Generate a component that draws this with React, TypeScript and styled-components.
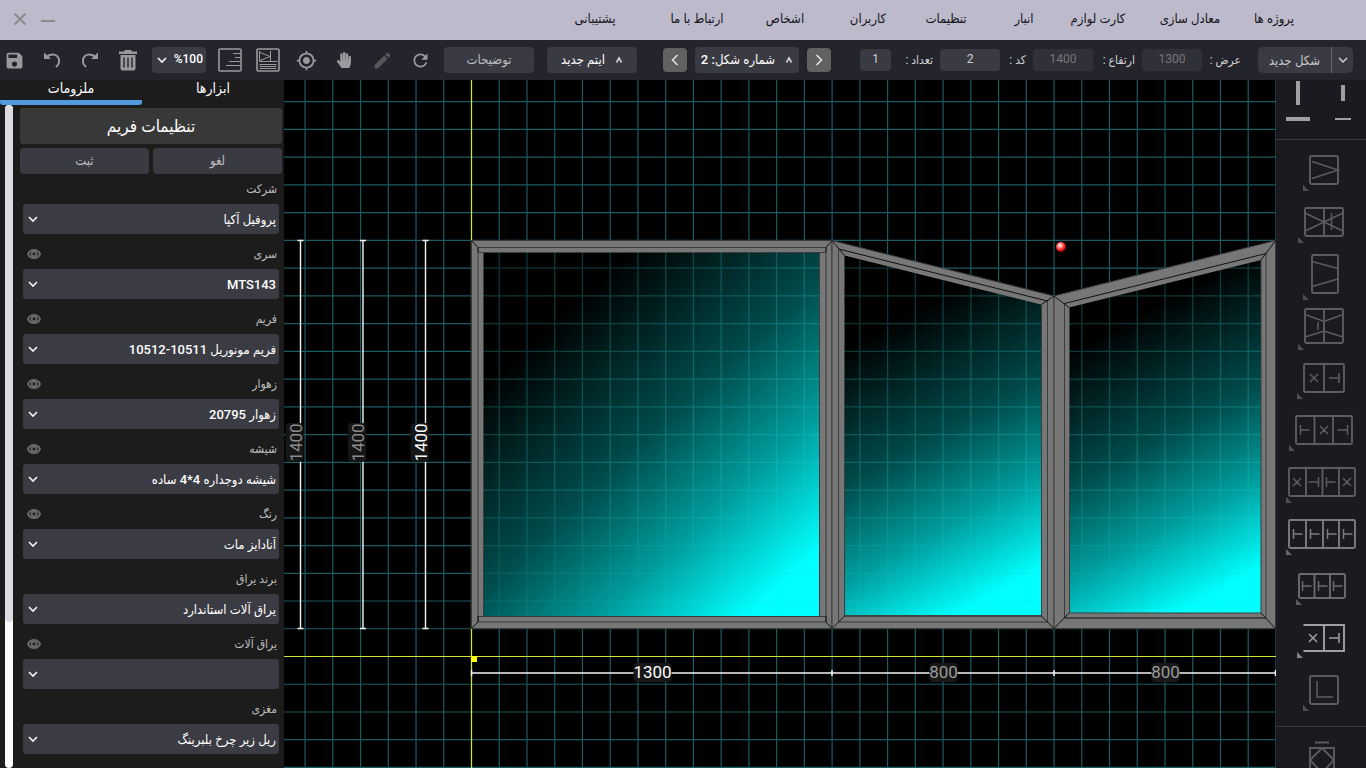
import React from "react";
import styled, { createGlobalStyle } from "styled-components";
import { MdSave, MdGpsFixed, MdEdit, MdRefresh } from "react-icons/md";
import { FaHandPaper } from "react-icons/fa";

const GlobalStyle = createGlobalStyle`
  * { box-sizing: border-box; }
  body {
    margin: 0;
    background: #000;
    font-family: Roboto, "DejaVu Sans Condensed", "DejaVu Sans", sans-serif;
    font-size: 12px;
    color: #d6d6d6;
  }
  button, input, select { font: inherit; color: inherit; border: 0; margin: 0; padding: 0; }
  button { cursor: pointer; }
`;

/* ---------- page frame ---------- */

const Page = styled.div`
  display: flex;
  flex-direction: column;
  height: 100vh;
  overflow: hidden;
`;

const MenuBar = styled.header`
  display: flex;
  flex: none;
  align-items: center;
  justify-content: space-between;
  height: 40px;
  padding: 0 54px 2px 8px;
  background: #bcbacb;
`;

const WindowButtons = styled.div`
  display: flex;
  gap: 4px;
`;

const WindowButton = styled.button`
  display: grid;
  place-items: center;
  width: 24px;
  height: 24px;
  background: none;
  svg { stroke: #8b8b8d; stroke-width: 2; fill: none; }
`;

const Menu = styled.nav`
  display: flex;
  direction: rtl;
`;

const MenuLink = styled.a<{ $width: number }>`
  width: ${(p) => p.$width}px;
  color: #15151d;
  font-size: 13px;
  line-height: 20px;
  text-align: center;
  text-decoration: none;
  white-space: nowrap;
`;

const Toolbar = styled.div`
  display: flex;
  flex: none;
  align-items: center;
  height: 40px;
  padding: 0 13px 0 2px;
  background: #24242d;
`;

const Group = styled.div<{ $gap: number; $before?: number }>`
  display: flex;
  align-items: center;
  gap: ${(p) => p.$gap}px;
  margin-left: ${(p) => p.$before ?? 0}px;
`;

const ToolButton = styled.button<{ $dim?: boolean }>`
  display: grid;
  place-items: center;
  width: 24px;
  height: 26px;
  background: none;
  color: ${(p) => (p.$dim ? "#57575b" : "#999a9c")};
  svg { display: block; }
`;

const ZoomBox = styled.div`
  position: relative;
  width: 54px;
  height: 26px;
  margin: 0 -2px;
`;

const ZoomSelect = styled.select`
  appearance: none;
  width: 100%;
  height: 100%;
  padding: 0 3px 2px;
  border-radius: 4px;
  background: #3a3a43;
  color: #fff;
  font-size: 12px;
  font-weight: 500;
  text-align: right;
`;

const Arrow = styled.svg<{ $left: number }>`
  position: absolute;
  left: ${(p) => p.$left}px;
  top: calc(50% - 5px);
  width: 10px;
  height: 10px;
  fill: none;
  stroke: #f4f4f4;
  stroke-width: 1.6;
  pointer-events: none;
`;

const TextButton = styled.button<{ $width: number; $strong?: boolean }>`
  display: flex;
  align-items: center;
  justify-content: center;
  gap: 10px;
  width: ${(p) => p.$width}px;
  height: 26px;
  padding-bottom: 1px;
  border-radius: 4px;
  background: #3a3a43;
  color: ${(p) => (p.$strong ? "#fff" : "#bdbdbf")};
  font-size: 13px;
  font-weight: ${(p) => (p.$strong ? 500 : 400)};
  direction: rtl;
  white-space: nowrap;
  svg { flex: none; fill: none; stroke: #d0d0d0; stroke-width: 1.6; }
`;

const StepButton = styled.button`
  display: grid;
  place-items: center;
  width: 24px;
  height: 24px;
  border-radius: 4px;
  background: #616161;
  svg { fill: none; stroke: #e6e6e6; stroke-width: 1.5; }
`;

const Fields = styled.div`
  display: flex;
  align-items: center;
  gap: 7px;
  margin-left: auto;
  direction: rtl;
`;

const Field = styled.label<{ $width: number }>`
  display: flex;
  align-items: center;
  justify-content: space-between;
  width: ${(p) => p.$width}px;
  white-space: nowrap;
  color: #d0d0d2;
`;

const FieldInput = styled.input<{ $width: number }>`
  flex: none;
  width: ${(p) => p.$width}px;
  height: 22px;
  padding-bottom: 2px;
  border-radius: 4px;
  background: #3a3a43;
  color: #d0d0d2;
  font-size: 12px;
  text-align: center;
  &:disabled { background: #303039; color: #77777c; }
`;

const SplitButton = styled.div`
  display: flex;
  width: 95px;
  height: 26px;
  margin-left: 17px;
  overflow: hidden;
  border-radius: 5px;
  background: #3a3a43;
`;

const SplitMain = styled.button`
  flex: 1;
  background: none;
  color: #c8c8ca;
  font-size: 13px;
`;

const SplitArrow = styled.button`
  display: grid;
  place-items: center;
  width: 22px;
  border-left: 1px solid #66666c;
  background: none;
  svg { fill: none; stroke: #d0d0d0; stroke-width: 1.5; }
`;

const Main = styled.main`
  display: flex;
  flex: 1;
  min-height: 0;
`;

/* ---------- settings panel ---------- */

const Panel = styled.aside`
  display: flex;
  flex: none;
  flex-direction: column;
  width: 284px;
  overflow: hidden;
  background: #1c1c1c;
`;

const Tabs = styled.div`
  display: flex;
  flex: none;
`;

const Tab = styled.button<{ $active?: boolean }>`
  flex: 1;
  height: 25px;
  padding-bottom: 4px;
  border-bottom: 5px solid ${(p) => (p.$active ? "#4f9bdc" : "transparent")};
  border-radius: 3px;
  background: none;
  color: #fff;
  font-size: 14px;
  font-weight: 500;
  line-height: 16px;
`;

const PanelBody = styled.div`
  display: flex;
  flex: 1;
  gap: 7px;
  min-height: 0;
  padding: 0 2px 0 5px;
`;

const ScrollTrack = styled.div`
  width: 8px;
  border-radius: 4px;
  background: #fff;
`;

const ScrollThumb = styled.div`
  height: 78%;
  border-radius: 4px;
  background: #dcdbe2;
`;

const PanelContent = styled.div`
  flex: 1;
  min-width: 0;
  padding-top: 3px;
  direction: rtl;
`;

const PanelTitle = styled.h2`
  margin: 0 0 4px;
  border-radius: 3px;
  background: #383838;
  color: #fff;
  font-size: 17px;
  font-weight: 500;
  line-height: 36px;
  text-align: center;
`;

const PanelActions = styled.div`
  display: flex;
  gap: 4px;
`;

const PanelButton = styled.button`
  flex: 1;
  height: 26px;
  padding-bottom: 2px;
  border-radius: 4px;
  background: #3a3a43;
  color: #bdbdbf;
  font-size: 13px;
`;

const Row = styled.div`
  height: 65px;
  padding: 0 3px;
`;

const RowHead = styled.div`
  display: flex;
  align-items: center;
  justify-content: space-between;
  height: 30px;
  padding: 0 2px 0 4px;
  color: #bcbcbc;
`;

const EyeButton = styled.button`
  display: block;
  width: 14px;
  height: 14px;
  background: none;
  svg { display: block; fill: none; stroke: #68686a; }
`;

const SelectBox = styled.div`
  position: relative;
  height: 30px;
`;

const Select = styled.select`
  appearance: none;
  width: 100%;
  height: 100%;
  padding: 0 3px;
  border-radius: 3px;
  background: #3b3b43;
  color: #fff;
  font-size: 13px;
  font-weight: 500;
`;

/* ---------- drawing canvas and shape rail ---------- */

const Canvas = styled.section`
  flex: 1;
  min-width: 0;
  background: #000;
  svg { display: block; width: 100%; height: 100%; }
`;

const Rail = styled.aside`
  display: flex;
  flex: none;
  flex-direction: column;
  align-items: center;
  width: 90px;
  overflow: hidden;
  background: #1a1a20;
`;

const LineTools = styled.div`
  display: flex;
  flex: none;
  justify-content: space-between;
  width: 100%;
  height: 60px;
  border-bottom: 1px solid #39393d;
`;

const RailButton = styled.button<{ $tone?: string }>`
  flex: none;
  display: block;
  background: none;
  color: ${(p) => p.$tone ?? "#5c5c60"};
  svg { display: block; }
`;

const ShapeList = styled.div`
  flex: none;
  width: 100%;
  padding: 4px 4px 10px 6px;
  border-bottom: 1px solid #39393d;
`;

/* ---------- data ---------- */

const menu: [string, number][] = [
  ["پروژه ها", 76],
  ["معادل سازی", 92],
  ["کارت لوازم", 92],
  ["انبار", 56],
  ["تنظیمات", 100],
  ["کاربران", 56],
  ["اشخاص", 110],
  ["ارتباط با ما", 66],
  ["پشتیبانی", 138],
];

const fields = [
  { label: "عرض :", value: "1300", width: 99, input: 60, disabled: true },
  { label: "ارتفاع :", value: "1400", width: 102, input: 60, disabled: true },
  { label: "کد :", value: "2", width: 86, input: 60 },
  { label: "تعداد :", value: "1", width: 73, input: 31 },
];

const settings = [
  { label: "شرکت", value: "پروفیل آکپا" },
  { label: "سری", value: "MTS143", eye: true },
  { label: "فریم", value: "فریم مونوریل 10511-10512", eye: true },
  { label: "زهوار", value: "زهوار 20795", eye: true },
  { label: "شیشه", value: "شیشه دوجداره 4*4 ساده", eye: true },
  { label: "رنگ", value: "آنادایز مات", eye: true },
  { label: "برند یراق", value: "یراق آلات استاندارد" },
  { label: "یراق آلات", value: "", eye: true },
  { label: "مغزی", value: "ریل زیر چرخ بلبرینگ" },
];

/* ---------- small icons ---------- */

const Down = () => <path d="M1 3 5 7 9 3" />;

const Up = () => (
  <svg width="8" height="8" viewBox="0 0 8 8"><path d="M1.5 6.500 4 2 6.500 6.500" /></svg>
);

const Chevron = ({ d }: { d: string }) => (
  <svg width="12" height="14" viewBox="0 0 12 14"><path d={d} /></svg>
);

const Eye = () => (
  <svg width="14" height="14" viewBox="0 0 14 14">
    <path d="M1 7C3.500 1.600 10.500 1.600 13 7 10.500 12.400 3.500 12.400 1 7Z" strokeWidth="2" />
    <circle cx="7" cy="7" r="2.400" strokeWidth="2" />
  </svg>
);

const Turn = ({ flip }: { flip?: boolean }) => (
  <svg width="20" height="20" viewBox="0 0 20 20" fill="none" stroke="currentColor" strokeWidth="2">
    <g transform={flip ? "matrix(-1 0 0 1 20 0)" : undefined}>
      <path d="M4 7.500C9 2.500 16 4 17 10c.4 3-1 5.500-3.200 6.800" />
      <path d="M2 2.500V9h7z" fill="currentColor" stroke="none" />
    </g>
  </svg>
);

const Trash = () => (
  <svg width="20" height="22" viewBox="0 0 20 22" fill="currentColor">
    <path d="M1 2.600h5L7 1h6l1 1.600h5v2.400H1z" />
    <path fillRule="evenodd" d="M2.500 6h15v13.500a2 2 0 0 1-2 2h-11a2 2 0 0 1-2-2zM5.300 8.500v10h1.400v-10zm4 0v10h1.400v-10zm4 0v10h1.400v-10z" />
  </svg>
);

const ListIcon = () => (
  <svg width="24" height="24" viewBox="0 0 24 24" fill="none" stroke="currentColor">
    <rect x="1" y="1" width="22" height="22" rx="1" strokeWidth="1.600" />
    <path d="M15 5.500h7M17 9.500h5M11 13.500h11M8 17.500h14" strokeWidth="1.200" />
  </svg>
);

const ReportIcon = () => (
  <svg width="24" height="24" viewBox="0 0 24 24" fill="none" stroke="currentColor">
    <rect x="1" y="1" width="22" height="22" rx="1" strokeWidth="1.600" />
    <path d="M3.500 3v10.500h18M14.500 3v10.500M4 4.500l10 4-10 4M3.500 16.500h17M3.500 18.500h17M3.500 20.500h17" />
  </svg>
);

/* ---------- rail shapes, each drawn in an 80 by 52 cell ---------- */

const cross = (x: number, y = 26) => `M${x - 4} ${y - 4}l8 8m0-8l-8 8`;
const teeLeft = (x: number, y = 26, l = 9) => `M${x} ${y - 5}v10M${x} ${y}h${l}`;
const teeRight = (x: number, y = 26, l = 10) => `M${x} ${y - 5}v10M${x} ${y}h${-l}`;

type Shape = {
  name: string;
  box?: [number, number, number, number];
  frame?: string;
  lines: string;
  mark: [number, number];
  tone?: string;
};

const shapes: Shape[] = [
  { name: "لولایی", box: [28, 12, 28, 28], lines: "M30 17.500 56 26 30 34.500", mark: [21, 41] },
  { name: "دو لنگه", box: [23, 12, 38, 28], frame: "M42 12v28", lines: "M23 17 61 35M23 35 61 17M49.500 17v17", mark: [16, 41] },
  { name: "در", box: [30, 7, 26, 38], lines: "M30 13.500 56 20.500M30 38.500 56 31", mark: [21, 46] },
  { name: "در دو لنگه", box: [23, 9, 38, 34], frame: "M42 9v34", lines: "M23 14.500 42 21.500 61 14.500M23 37 42 31 61 37M36 22v8", mark: [16, 44] },
  { name: "کشویی دو", box: [22, 12, 40, 28], frame: "M42 12v28", lines: cross(32) + teeRight(57), mark: [15, 41] },
  { name: "کشویی سه", box: [14, 12, 56, 28], frame: "M32.500 12v28M51 12v28", lines: teeLeft(18.5) + cross(42) + teeRight(65.5), mark: [7, 41] },
  { name: "کشویی چهار", box: [7, 12, 66, 28], frame: "M24 12v28M40.500 12v28M57 12v28", lines: cross(15) + teeRight(36.5) + teeLeft(44.5) + cross(65), mark: [4, 41] },
  { name: "کشویی چهار ریل", box: [7, 12, 66, 28], frame: "M24 12v28M41 12v28M57 12v28", lines: teeLeft(11.5) + teeLeft(28.5) + teeLeft(45.5) + teeLeft(61.5), mark: [4, 41], tone: "#7c7c80" },
  { name: "کشویی سه ریل", box: [17, 14, 46, 24], frame: "M32.500 14v24M48 14v24", lines: teeLeft(20.5) + teeLeft(36.5) + teeLeft(51.5), mark: [14, 39], tone: "#6b6b6f" },
  { name: "کشویی باز", frame: "M21.500 13H62V39H21.500M42 13v26", lines: cross(31) + teeRight(57), mark: [15, 40], tone: "#a0a0a3" },
  { name: "کنج", box: [28, 12, 28, 28], lines: "M35 17v16h16", mark: [21, 41] },
];

const ShapeIcon = ({ box, frame, lines, mark: [mx, my] }: Shape) => (
  <svg width="80" height="52" viewBox="0 0 80 52" fill="none" stroke="currentColor">
    {box && <rect x={box[0]} y={box[1]} width={box[2]} height={box[3]} rx="1.500" strokeWidth="1.900" />}
    {frame && <path d={frame} strokeWidth="1.900" />}
    <path d={lines} strokeWidth="1.500" />
    <path d={`M${mx} ${my}v6h6z`} fill="currentColor" stroke="none" opacity="0.800" />
  </svg>
);

/* ---------- the drawing ---------- */

const STEP = 27.74;
const verticals = Array.from({ length: 36 }, (_, i) => 471.5 + (i - 6) * STEP);
const horizontals = Array.from({ length: 25 }, (_, i) => 656.5 + (i - 20) * STEP);
const gridPath =
  verticals.map((x) => `M${x.toFixed(2)} 80V768`).join("") +
  horizontals.map((y) => `M284 ${y.toFixed(2)}H1276`).join("");

const panes = [
  {
    id: "glass1",
    outer: "471.500,240.500 832,240.500 832,628.500 471.500,628.500",
    glass: "483,252 820,252 820,616 483,616",
    lines: "M478 247.500H826V622H478ZM478 252.500H826M478 616.500H826M483.500 252V616M819.500 252V616",
    miters: "M471.500 240.500 478 247.500V252M832 240.500 826 247.500V252M471.500 628.500 478 622V616M832 628.500 826 622V616",
    vector: [483, 252, 820, 616],
  },
  {
    id: "glass2",
    outer: "832,240.500 1054,296 1054,628.500 832,628.500",
    glass: "844.500,255.500 1041,304.500 1041,615 844.500,615",
    lines: "M1047.500 301V622H838.500V249M844.500 255.500V616M1041.500 304.500V616",
    miters: "M832 240.500 844.500 255.500M1054 296 1041.500 304.500M832 628.500 844.500 616M1054 628.500 1041.500 616M844.500 616H1041.500M838.500 249 1047.500 301",
    vector: [845, 255, 1041, 615],
  },
  {
    id: "glass3",
    outer: "1054,296 1275.500,240.500 1275.500,628.500 1054,628.500",
    glass: "1069,307.500 1261,260 1261,613 1069,613",
    lines: "M1064.500 303.500V618M1266 253.500V618M1069.500 307V613H1261V260",
    miters: "M1054 296 1069 307.500M1275.500 240.500 1261 260M1054 628.500 1069 613M1275.500 628.500 1261 613M1064.500 303.500 1266 253.500M1064.500 618H1266",
    vector: [1069, 260, 1261, 613],
  },
];

const heights = [
  { x: 300.5, color: "#8d8d8d" },
  { x: 363, color: "#8d8d8d" },
  { x: 425.5, color: "#fff" },
];

const widths = [
  { x: 652.5, label: "1300", half: 19, color: "#fff" },
  { x: 943.5, label: "800", half: 14, color: "#9a9a9a" },
  { x: 1165.5, label: "800", half: 14, color: "#9a9a9a" },
];

const Drawing = () => (
  <svg viewBox="284 80 992 688" preserveAspectRatio="xMinYMin slice" role="img" aria-label="نقشه پنجره">
    <defs>
      {panes.map(({ id, vector: [x1, y1, x2, y2] }) => (
        <linearGradient key={id} id={id} gradientUnits="userSpaceOnUse" x1={x1} y1={y1} x2={x2} y2={y2}>
          <stop offset="0.200" stopColor="#000" />
          <stop offset="0.500" stopColor="#004c4c" />
          <stop offset="0.700" stopColor="#009c9c" />
          <stop offset="0.900" stopColor="#0ff" />
        </linearGradient>
      ))}
      <linearGradient id="fade" gradientUnits="userSpaceOnUse" x1="0" y1="252" x2="0" y2="616">
        <stop offset="0.600" stopColor="#3cc" stopOpacity="0.260" />
        <stop offset="1" stopColor="#3cc" stopOpacity="0.080" />
      </linearGradient>
      <clipPath id="panes">
        {panes.map((p) => <polygon key={p.id} points={p.glass} />)}
      </clipPath>
      <radialGradient id="ball" cx="0.400" cy="0.350" r="0.600">
        <stop offset="0" stopColor="#fff" />
        <stop offset="0.600" stopColor="#f44" />
        <stop offset="1" stopColor="#a00" />
      </radialGradient>
    </defs>

    <path d={gridPath} stroke="#1b5b63" strokeWidth="1.200" />
    <path d="M471.500 80V768M284 656.500H1276" stroke="#d3e23c" strokeWidth="1.200" />

    {panes.map((p) => (
      <g key={p.id} fill="none">
        <polygon points={p.outer} fill="#777" stroke="#3c3c3c" />
        <polygon points={p.glass} fill={`url(#${p.id})`} />
        <path d={p.lines} stroke="#3c3c3c" />
        <path d={p.miters} stroke="#111" />
      </g>
    ))}
    <path d={gridPath} stroke="url(#fade)" strokeWidth="1.300" clipPath="url(#panes)" />
    <circle cx="1061" cy="247" r="5" fill="url(#ball)" />
    <rect x="471" y="656" width="6" height="6" fill="#ff0" />

    <g fontFamily="Roboto, sans-serif" fontSize="17" textAnchor="middle">
      {heights.map(({ x, color }) => (
        <g key={x}>
          <path d={`M${x} 240.500V628.500M${x - 3} 240.500h6M${x - 3} 628.500h6`} stroke="#f4f4f4" strokeWidth="1.400" />
          <rect x={x - 15} y="423" width="18" height="39" rx="4" fill="#161616" />
          <text transform={`translate(${x + 1} 442.500) rotate(-90)`} fill={color}>1400</text>
        </g>
      ))}
      <path d="M471.500 673H1276M471.500 670v6M832 670v6M1054 670v6M1275.500 670v6" stroke="#f4f4f4" strokeWidth="1.500" />
      {widths.map(({ x, label, half, color }) => (
        <g key={x}>
          <rect x={x - half} y="663" width={half * 2} height="19" rx="4" fill="#181818" />
          <text x={x} y="678" fill={color}>{label}</text>
        </g>
      ))}
    </g>
  </svg>
);

export default function App() {
  return (
    <Page>
      <GlobalStyle />
      <MenuBar>
        <WindowButtons>
          <WindowButton aria-label="بستن">
            <svg width="12" height="12" viewBox="0 0 12 12"><path d="M.5.5l11 11m0-11l-11 11" /></svg>
          </WindowButton>
          <WindowButton aria-label="کوچک کردن">
            <svg width="14" height="8" viewBox="0 0 14 8"><path d="M0 6h14" /></svg>
          </WindowButton>
        </WindowButtons>
        <Menu>
          {menu.map(([text, width]) => (
            <MenuLink key={text} href="#" $width={width}>{text}</MenuLink>
          ))}
        </Menu>
      </MenuBar>

      <Toolbar>
        <Group $gap={14}>
          <ToolButton aria-label="ذخیره"><MdSave size={21} /></ToolButton>
          <ToolButton aria-label="واگرد"><Turn /></ToolButton>
          <ToolButton aria-label="ازنو"><Turn flip /></ToolButton>
          <ToolButton aria-label="حذف"><Trash /></ToolButton>
          <ZoomBox>
            <ZoomSelect aria-label="بزرگنمایی"><option>%100</option></ZoomSelect>
            <Arrow $left={5} viewBox="0 0 10 10"><Down /></Arrow>
          </ZoomBox>
          <ToolButton aria-label="فهرست"><ListIcon /></ToolButton>
          <ToolButton aria-label="گزارش"><ReportIcon /></ToolButton>
          <ToolButton aria-label="مرکز"><MdGpsFixed size={21} /></ToolButton>
          <ToolButton aria-label="جابجایی"><FaHandPaper size={16} /></ToolButton>
          <ToolButton aria-label="ویرایش" $dim><MdEdit size={21} /></ToolButton>
          <ToolButton aria-label="تازه سازی"><MdRefresh size={21} /></ToolButton>
        </Group>
        <Group $gap={13} $before={12}>
          <TextButton $width={90}>توضیحات</TextButton>
          <TextButton $width={90} $strong><Up />ایتم جدید</TextButton>
        </Group>
        <Group $gap={8} $before={26}>
          <StepButton aria-label="قبلی"><Chevron d="M8.500 2 3.500 7l5 5" /></StepButton>
          <TextButton $width={104} $strong><Up />شماره شکل: 2</TextButton>
          <StepButton aria-label="بعدی"><Chevron d="M3.500 2l5 5-5 5" /></StepButton>
        </Group>
        <Fields>
          {fields.map((f) => (
            <Field key={f.label} $width={f.width}>
              {f.label}
              <FieldInput $width={f.input} defaultValue={f.value} disabled={f.disabled} />
            </Field>
          ))}
        </Fields>
        <SplitButton>
          <SplitMain>شکل جدید</SplitMain>
          <SplitArrow aria-label="بیشتر">
            <svg width="10" height="10" viewBox="0 0 10 10"><Down /></svg>
          </SplitArrow>
        </SplitButton>
      </Toolbar>

      <Main>
        <Panel>
          <Tabs>
            <Tab $active>ملزومات</Tab>
            <Tab>ابزارها</Tab>
          </Tabs>
          <PanelBody>
            <ScrollTrack><ScrollThumb /></ScrollTrack>
            <PanelContent>
              <PanelTitle>تنظیمات فریم</PanelTitle>
              <PanelActions>
                <PanelButton>لغو</PanelButton>
                <PanelButton>ثبت</PanelButton>
              </PanelActions>
              {settings.map((s, i) => (
                <Row key={s.label}>
                  <RowHead>
                    <label htmlFor={`setting${i}`}>{s.label}</label>
                    {s.eye && <EyeButton aria-label="نمایش"><Eye /></EyeButton>}
                  </RowHead>
                  <SelectBox>
                    <Select id={`setting${i}`}><option>{s.value}</option></Select>
                    <Arrow $left={5} viewBox="0 0 10 10"><Down /></Arrow>
                  </SelectBox>
                </Row>
              ))}
            </PanelContent>
          </PanelBody>
        </Panel>

        <Canvas><Drawing /></Canvas>

        <Rail>
          <LineTools>
            <RailButton $tone="#a0a0a2" aria-label="خط ضخیم">
              <svg width="44" height="58" viewBox="0 0 44 58" stroke="currentColor" strokeWidth="4">
                <path d="M22 0v24M10 38h24" />
              </svg>
            </RailButton>
            <RailButton $tone="#a0a0a2" aria-label="خط نازک">
              <svg width="44" height="58" viewBox="0 0 44 58" stroke="currentColor">
                <path d="M21 4v16" strokeWidth="4" />
                <path d="M13 38h16" strokeWidth="2" />
              </svg>
            </RailButton>
          </LineTools>
          <ShapeList>
            {shapes.map((s) => (
              <RailButton key={s.name} aria-label={s.name} $tone={s.tone}><ShapeIcon {...s} /></RailButton>
            ))}
          </ShapeList>
          <RailButton aria-label="لوزی">
            <svg width="80" height="52" viewBox="0 0 80 52" fill="none" stroke="currentColor" strokeWidth="1.900">
              <path d="M34 15.500h14M29 21h24v26H29ZM41 21 53 33 41 46 29 33Z" />
            </svg>
          </RailButton>
        </Rail>
      </Main>
    </Page>
  );
}
